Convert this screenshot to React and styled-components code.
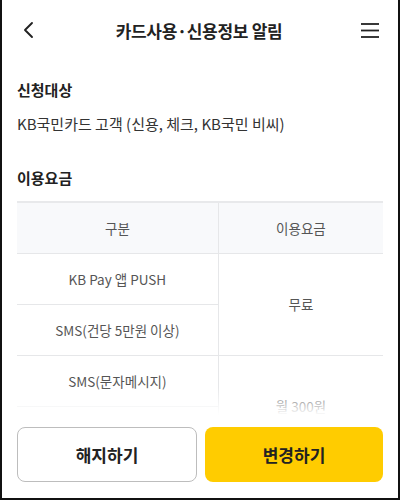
import React from 'react'
import styled, { createGlobalStyle } from 'styled-components'

const GlobalStyle = createGlobalStyle`
  html, body {
    margin: 0;
    padding: 0;
    background: #fff;
  }
  * {
    box-sizing: border-box;
  }
  body {
    font-family: "Noto Sans CJK KR", "Noto Sans", sans-serif;
    color: #222;
  }
`

const Screen = styled.div`
  width: 400px;
  height: 500px;
  display: flex;
  flex-direction: column;
  border-left: 2px solid #111;
  border-right: 2px solid #111;
  border-bottom: 2px solid #111;
  background: #fff;
  overflow: hidden;
`

const Header = styled.header`
  height: 60px;
  flex-shrink: 0;
  display: flex;
  align-items: center;
  justify-content: space-between;
  padding: 0 16px 0 14px;
`

const IconButton = styled.button`
  width: 24px;
  height: 24px;
  padding: 0;
  border: none;
  background: none;
  display: flex;
  align-items: center;
  justify-content: center;
`

const Title = styled.h1`
  margin: 0;
  font-size: 17px;
  font-weight: 700;
  color: #222;
  letter-spacing: -0.3px;
`

const Content = styled.main`
  flex: 1;
  overflow: hidden;
  padding: 16px 15px 0;
`

const SectionTitle = styled.h2`
  margin: 0;
  font-size: 15px;
  font-weight: 700;
  color: #222;
  line-height: 28px;
`

const Paragraph = styled.p`
  margin: 6px 0 0;
  font-size: 15px;
  color: #333;
  line-height: 28px;
  letter-spacing: 0;
`

const Section = styled.section`
  margin-top: ${p => p.$gap || 0}px;
`

const Table = styled.table`
  width: 100%;
  margin-top: 9px;
  border-collapse: collapse;
  border-top: 2px solid #e8e9eb;
  table-layout: fixed;
`

const Th = styled.th`
  height: 51px;
  background: #f8f9fb;
  font-size: 13.5px;
  font-weight: 400;
  color: #555;
  border-bottom: 1px solid #e6e7e9;
  border-left: ${p => (p.$divider ? '1px solid #e6e7e9' : 'none')};
`

const Td = styled.td`
  height: 51px;
  text-align: center;
  font-size: 13.5px;
  color: #555;
  border-bottom: 1px solid #e6e7e9;
  border-left: ${p => (p.$divider ? '1px solid #e6e7e9' : 'none')};
`

const Footer = styled.footer`
  position: relative;
  flex-shrink: 0;
  display: flex;
  gap: 8px;
  padding: 12px 15px 16px;
  background: #fff;

  &::before {
    content: '';
    position: absolute;
    left: 0;
    right: 0;
    top: -28px;
    height: 28px;
    background: linear-gradient(to bottom, rgba(255, 255, 255, 0), #fff);
  }
`

const ActionButton = styled.button`
  flex: 1;
  height: 55px;
  border-radius: 8px;
  font-family: inherit;
  font-size: 17px;
  font-weight: 700;
  color: #222;
  border: ${p => (p.$primary ? 'none' : '1px solid #bdbdbd')};
  background: ${p => (p.$primary ? '#ffcc00' : '#fff')};
`

const BackIcon = () => (
  <svg width="24" height="24" viewBox="0 0 24 24" fill="none">
    <polyline points="16,5 9,12 16,19" stroke="#222" strokeWidth="1.9" strokeLinecap="round" strokeLinejoin="round" />
  </svg>
)

const MenuIcon = () => (
  <svg width="24" height="24" viewBox="0 0 24 24" fill="none">
    <g stroke="#222" strokeWidth="1.8">
      <line x1="3" y1="6" x2="21" y2="6" />
      <line x1="3" y1="12.5" x2="21" y2="12.5" />
      <line x1="3" y1="19" x2="21" y2="19" />
    </g>
  </svg>
)

// the last row sits under the footer, only its fee cell peeks out
const rows = [
  { label: 'KB Pay 앱 PUSH', fee: '무료', span: 2 },
  { label: 'SMS(건당 5만원 이상)' },
  { label: 'SMS(문자메시지)', fee: '월 300원', span: 2 },
  { label: '' },
]

export default function App() {
  return (
    <>
      <GlobalStyle />
      <Screen>
        <Header>
          <IconButton aria-label="뒤로">
            <BackIcon />
          </IconButton>
          <Title>카드사용·신용정보 알림</Title>
          <IconButton aria-label="메뉴">
            <MenuIcon />
          </IconButton>
        </Header>

        <Content>
          <Section>
            <SectionTitle>신청대상</SectionTitle>
            <Paragraph>KB국민카드 고객 (신용, 체크, KB국민 비씨)</Paragraph>
          </Section>

          <Section $gap={26}>
            <SectionTitle>이용요금</SectionTitle>
            <Table>
              <colgroup>
                <col style={{ width: '55%' }} />
                <col />
              </colgroup>
              <thead>
                <tr>
                  <Th>구분</Th>
                  <Th $divider>이용요금</Th>
                </tr>
              </thead>
              <tbody>
                {rows.map((r, i) => (
                  <tr key={i}>
                    <Td>{r.label}</Td>
                    {r.fee && (
                      <Td $divider rowSpan={r.span}>
                        {r.fee}
                      </Td>
                    )}
                  </tr>
                ))}
              </tbody>
            </Table>
          </Section>
        </Content>

        <Footer>
          <ActionButton>해지하기</ActionButton>
          <ActionButton $primary>변경하기</ActionButton>
        </Footer>
      </Screen>
    </>
  )
}
